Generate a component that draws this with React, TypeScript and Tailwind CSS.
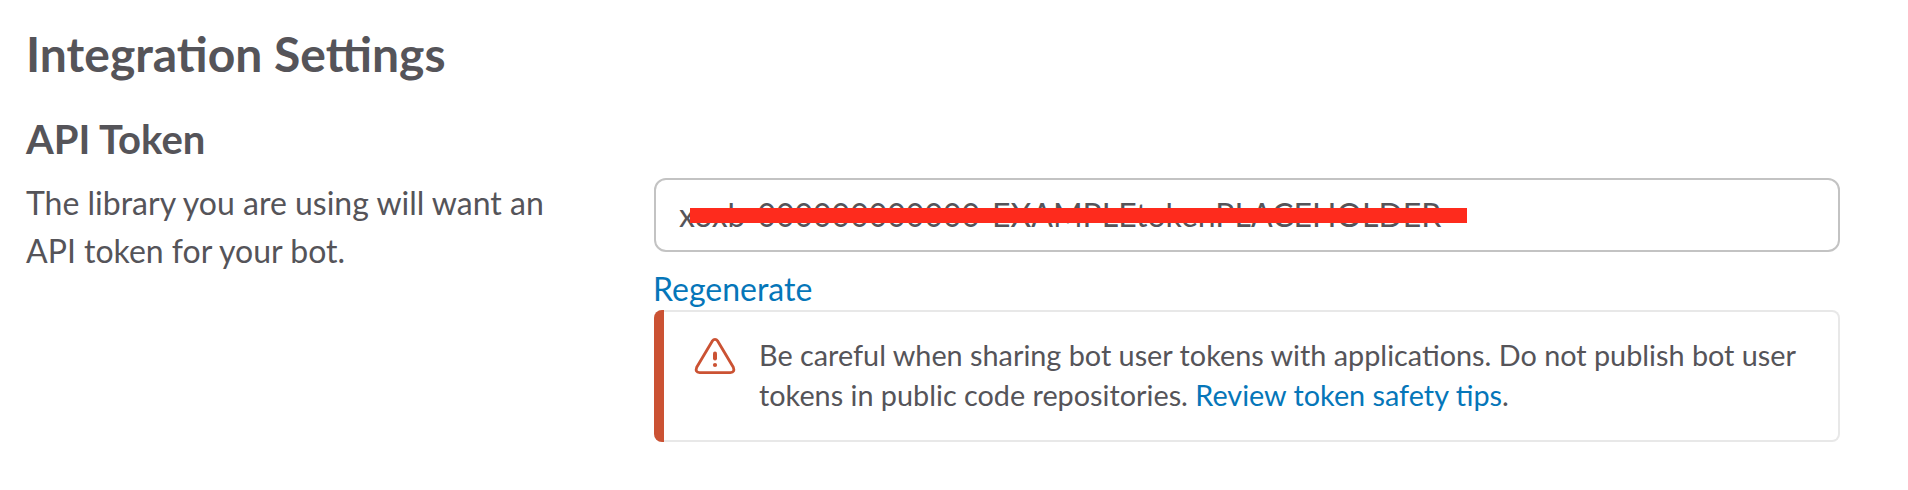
const PLACEHOLDER_TOKEN = 'xoxb-000000000000-EXAMPLEtokenPLACEHOLDER';

function WarningIcon() {
  return (
    <svg className="mt-[25px] h-[38px] w-[42px] shrink-0" viewBox="0 0 42 38" fill="none">
      <path
        d="M18.2 4.2Q21 0.4 23.8 4.2L39.3 30.2Q41.2 35.5 36.4 35.6H5.6Q0.8 35.5 2.7 30.2Z"
        stroke="#cb5233"
        strokeWidth="2.8"
        strokeLinejoin="round"
      />
      <path d="M21 16.5V21.5" stroke="#cb5233" strokeWidth="4" strokeLinecap="round" />
      <circle cx="21" cy="28" r="2.1" fill="#cb5233" />
    </svg>
  );
}

export default function App() {
  return (
    <main className="h-[490px] w-[1908px] bg-white pl-[26px] pt-[22px] font-['Lato',sans-serif] text-[32px] leading-[48px] text-[#555459]">
      <h1 className="h-[92px] text-[48px] font-bold leading-[64px]">Integration Settings</h1>
      <div className="flex">
        <section className="w-[628px] shrink-0">
          <h2 className="pb-[15px] text-[40px] font-bold leading-[50px]">API Token</h2>
          <p className="w-[560px]">
            The library you are using will want an
            <br />
            API token for your bot.
          </p>
        </section>
        <section className="w-[1186px] pt-[64px]">
          <div className="relative flex h-[74px] items-center overflow-hidden rounded-[12px] border-2 border-[#c3c3c3] pl-[23px]">
            <span className="whitespace-nowrap">{PLACEHOLDER_TOKEN}</span>
            <span className="absolute left-[34px] top-[28px] h-[15px] w-[777px] bg-[#fe2b1d]" />
          </div>
          <a className="-ml-px mt-[13px] block h-[45px] leading-[48px] text-[#0576b9]">Regenerate</a>
          <div className="flex h-[132px] rounded-[8px] border-2 border-l-0 border-[#e8e8e8]">
            <div className="-my-[2px] w-[10px] shrink-0 rounded-l-[8px] bg-[#cb5233]" />
            <div className="flex pl-[30px]">
              <WarningIcon />
              <p className="whitespace-nowrap pl-[23px] pt-[23px] text-[28.8px] leading-[40px]">
                Be careful when sharing bot user tokens with applications. Do not publish bot user
                <br />
                tokens in public code repositories. <a className="text-[#0576b9]">Review token safety tips</a>.
              </p>
            </div>
          </div>
        </section>
      </div>
    </main>
  );
}
